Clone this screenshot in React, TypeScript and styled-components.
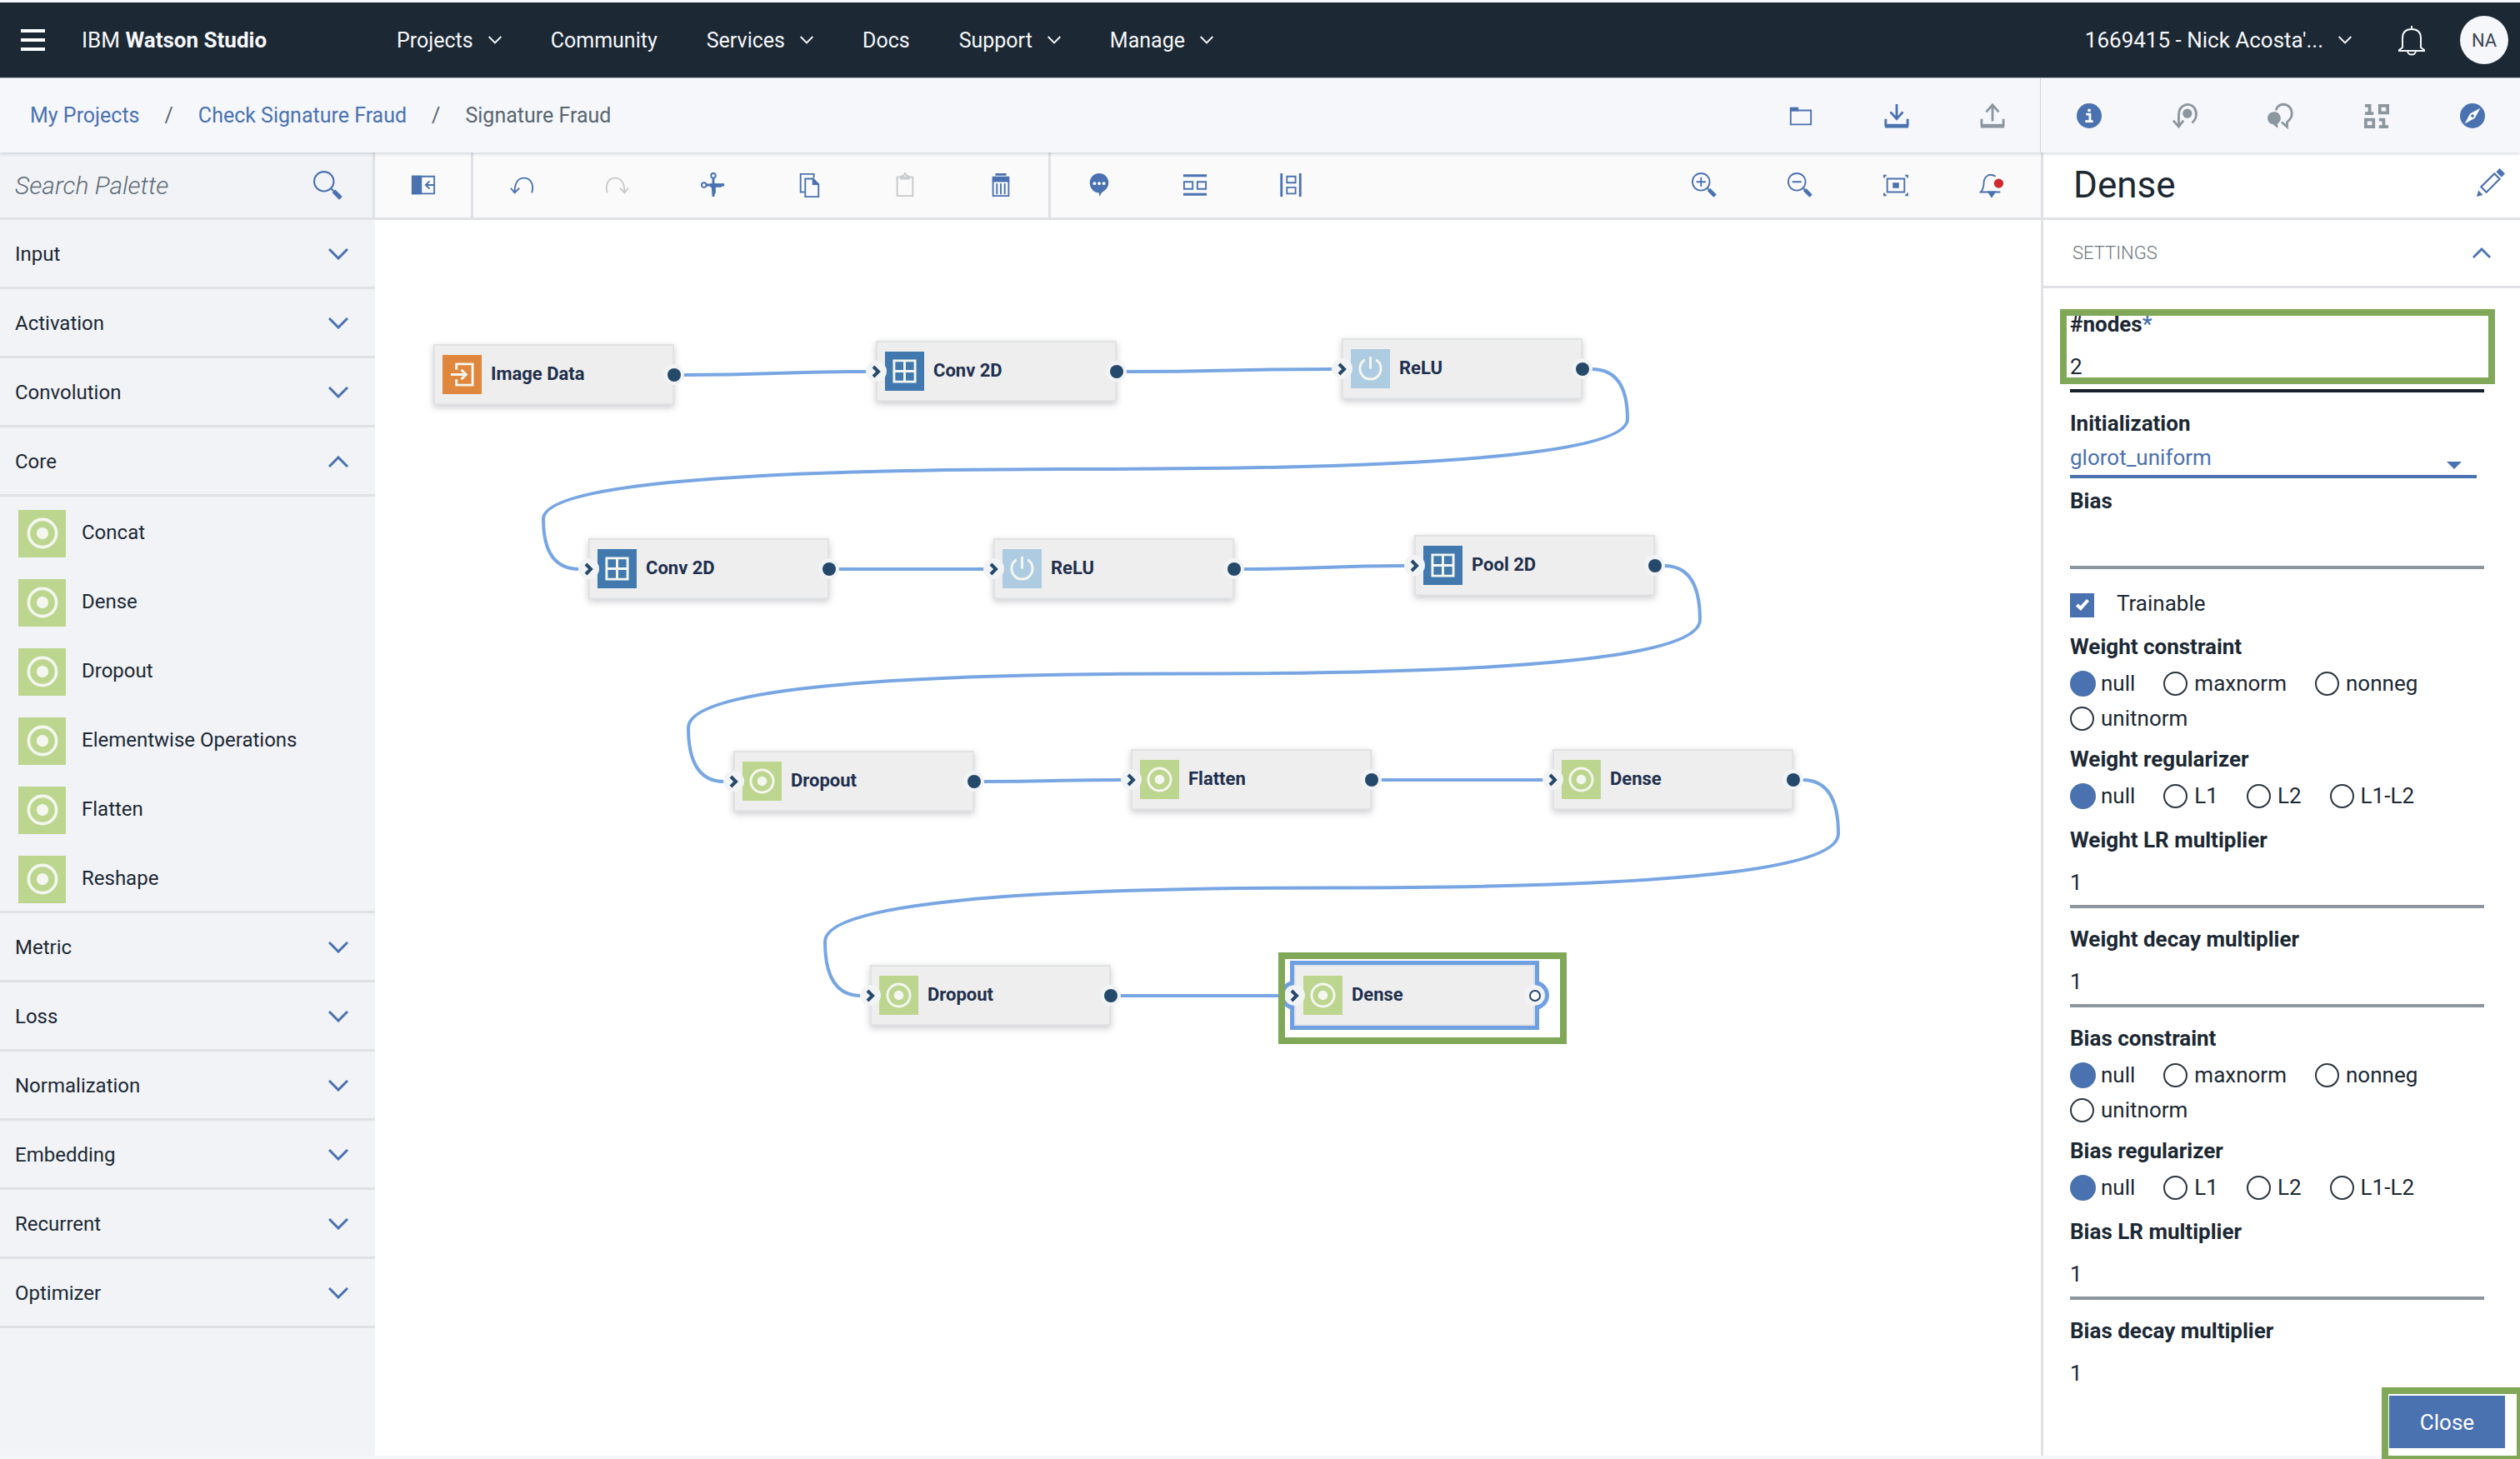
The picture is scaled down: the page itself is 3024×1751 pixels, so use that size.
import React from "react";
import styled, { createGlobalStyle, css } from "styled-components";

const color = {
  ink: "#1c2833",
  blue: "#4a71b0",
  grey: "#8c969e",
  line: "#dfe1e6",
  paper: "#f5f7fb",
  palette: "#f1f3f7",
  link: "#78a6e3",
  select: "#6f9fe0",
  port: "#25496b",
  mark: "#80a858",
};

const GlobalStyle = createGlobalStyle`
  *, *::before, *::after { box-sizing: border-box; }
  body {
    margin: 0;
    background: #fff;
    color: ${color.ink};
    font-family: Roboto, "Liberation Sans", sans-serif;
    font-size: 26px;
  }
  button, input, select { font: inherit; color: inherit; }
  button { border: 0; padding: 0; background: none; cursor: pointer; }
  a { color: inherit; text-decoration: none; }
`;

/* ---------- Shell ---------- */

const Page = styled.div`
  display: flex;
  flex-direction: column;
  height: 100vh;
  border-bottom: 4px solid ${color.paper};
`;

const Header = styled.header`
  flex: none;
  display: flex;
  align-items: center;
  height: 94px;
  padding: 0 14px 0 25px;
  border-top: 3px solid ${color.paper};
  border-bottom: 1px solid #b9c2ca;
  background: ${color.ink};
  color: #f5f7fb;
`;

const MenuButton = styled.button`
  display: flex;
  flex-direction: column;
  gap: 7px;
  width: 29px;
`;

const MenuBar = styled.span`
  height: 4px;
  background: #fff;
`;

const Brand = styled.a`
  margin-left: 44px;
  width: 378px;
`;

const Nav = styled.nav`
  flex: 1;
  display: flex;
  align-items: center;
  gap: 59px;
  font-size: 25px;
`;

const NavButton = styled.button`
  display: flex;
  align-items: center;
  gap: 18px;
`;

const BellButton = styled.button`
  display: flex;
  margin: 0 42px 0 56px;
`;

const Avatar = styled.button`
  width: 58px;
  height: 58px;
  border-radius: 50%;
  background: ${color.paper};
  color: #3c4650;
  font-size: 22px;
`;

const CrumbBar = styled.div`
  flex: none;
  position: relative;
  z-index: 2;
  display: flex;
  height: 89px;
  background: ${color.paper};
  box-shadow: 0 2px 4px rgba(40, 50, 70, 0.16);
`;

const Crumbs = styled.nav`
  flex: 1;
  display: flex;
  align-items: center;
  gap: 30px;
  padding-left: 36px;
  color: #5a6570;
  font-size: 25px;
  a { color: ${color.blue}; }
`;

const IconGroup = styled.div<{ $ruled?: boolean }>`
  display: flex;
  border-left: ${(p) => (p.$ruled ? `1px solid #cfd4da` : "0")};
`;

const IconButton = styled.button<{ $tone?: "grey" | "faint" }>`
  flex: none;
  width: 115px;
  display: flex;
  align-items: center;
  justify-content: center;
  color: ${(p) => (p.$tone === "grey" ? color.grey : p.$tone === "faint" ? "#c6c8ca" : color.blue)};
`;

const Body = styled.div`
  flex: 1;
  min-height: 0;
  display: grid;
  grid-template-columns: 450px minmax(0, 1fr) 575px;
`;

/* ---------- Palette ---------- */

const Palette = styled.aside`
  background: ${color.palette};
`;

const SearchBox = styled.label`
  display: flex;
  align-items: center;
  height: 81px;
  padding: 0 37px 0 18px;
  border-right: 3px solid ${color.line};
  border-bottom: 3px solid ${color.line};
  color: ${color.blue};
`;

const SearchInput = styled.input`
  flex: 1;
  min-width: 0;
  border: 0;
  padding: 0;
  outline: 0;
  background: none;
  font-size: 30px;
  font-style: italic;
  font-weight: 300;
  &::placeholder { color: #5f6a75; opacity: 1; }
`;

const Category = styled.button`
  display: flex;
  align-items: center;
  justify-content: space-between;
  width: 100%;
  height: 83px;
  padding: 2px 32px 0 18px;
  border-bottom: 3px solid ${color.line};
  font-size: 24px;
  svg { color: ${color.blue}; }
`;

const NodeList = styled.div`
  display: flex;
  flex-direction: column;
  padding-bottom: 2px;
`;

const PaletteItem = styled.button`
  display: flex;
  align-items: center;
  gap: 19px;
  height: 83px;
  padding: 5px 0 0 22px;
  font-size: 24px;
`;

const ItemName = styled.span`
  padding-bottom: 3px;
`;

/* ---------- Toolbar and canvas ---------- */

const Stage = styled.main`
  display: flex;
  flex-direction: column;
  min-width: 0;
`;

const Toolbar = styled.div`
  flex: none;
  display: flex;
  height: 81px;
  padding-right: 2px;
  border-bottom: 3px solid ${color.line};
  background: #fafafa;
`;

const Divider = styled.span`
  width: 3px;
  background: ${color.line};
`;

const Spacer = styled.span`
  flex: 1;
`;

const Canvas = styled.section`
  flex: 1;
  position: relative;
  overflow: hidden;
`;

const Links = styled.svg`
  position: absolute;
  inset: 0;
  width: 100%;
  height: 100%;
`;

const NodeCard = styled.div<{ $x: number; $y: number; $selected?: boolean }>`
  position: absolute;
  left: ${(p) => p.$x}px;
  top: ${(p) => p.$y}px;
  display: flex;
  align-items: center;
  gap: 11px;
  width: 289px;
  height: 73px;
  padding-left: 9px;
  border: 2px solid #e0e2e4;
  background: #eee;
  box-shadow: 0 3px 8px rgba(40, 40, 60, 0.24);
  color: #1f2f4d;
  font-size: 22px;
  font-weight: 700;
  ${(p) => p.$selected && css`box-shadow: 0 0 0 5px ${color.select};`}
`;

const Port = styled.span<{ $side: "left" | "right"; $selected?: boolean }>`
  position: absolute;
  top: 22px;
  ${(p) => p.$side}: -14px;
  width: 25px;
  height: 25px;
  border-radius: 50%;
  background: #f2f3f4;
  display: flex;
  align-items: center;
  justify-content: center;
  svg { position: relative; }
  ${(p) => p.$selected && css`
    &::before {
      content: "";
      position: absolute;
      inset: 0;
      border-radius: 50%;
      box-shadow: 0 0 0 5px ${color.select};
      clip-path: ${p.$side === "left" ? "inset(-6px 13px -6px -6px)" : "inset(-6px -6px -6px 13px)"};
    }
  `}
`;

const Tile = styled.span<{ $fill: string; $size: number }>`
  flex: none;
  display: flex;
  align-items: center;
  justify-content: center;
  width: ${(p) => p.$size}px;
  height: ${(p) => p.$size}px;
  background: ${(p) => p.$fill};
  color: #f4f6f0;
`;

const CanvasMark = styled.span`
  position: absolute;
  left: 1084px;
  top: 879px;
  width: 346px;
  height: 110px;
  border: 8px solid ${color.mark};
  pointer-events: none;
`;

/* ---------- Settings panel ---------- */

const Panel = styled.aside`
  display: flex;
  flex-direction: column;
  min-height: 0;
  border-left: 3px solid ${color.line};
`;

const PanelTitle = styled.div`
  flex: none;
  display: flex;
  align-items: center;
  justify-content: space-between;
  height: 81px;
  padding: 0 18px 0 36px;
  border-bottom: 3px solid ${color.line};
  color: ${color.blue};
`;

const Title = styled.h1`
  margin: 0;
  font-size: 44px;
  font-weight: 400;
  color: ${color.ink};
`;

const SectionButton = styled.button`
  flex: none;
  display: flex;
  align-items: center;
  justify-content: space-between;
  height: 82px;
  padding: 0 35px;
  border-bottom: 3px solid ${color.line};
  color: #6d7680;
  font-size: 22px;
  font-weight: 300;
  svg { color: ${color.blue}; }
`;

const Form = styled.form`
  flex: 1;
  min-height: 0;
  overflow: hidden;
  padding: 27px 43px 0 32px;
`;

const FieldBox = styled.div<{ $gap?: number }>`
  position: relative;
  margin-bottom: ${(p) => p.$gap ?? 21}px;
`;

const caption = css`
  display: block;
  line-height: 32px;
  font-weight: 700;
`;

const FieldLabel = styled.label`
  ${caption}
  span { color: ${color.blue}; }
`;

const TextInput = styled.input<{ $active?: boolean }>`
  display: block;
  width: 100%;
  height: 66px;
  padding: 8px 0 0;
  border: 0;
  border-bottom: 4px solid ${(p) => (p.$active ? "#15202b" : color.grey)};
  outline: 0;
  background: none;
`;

const FieldMark = styled.span`
  position: absolute;
  top: -2px;
  left: -12px;
  right: -13px;
  height: 90px;
  border: 8px solid ${color.mark};
  pointer-events: none;
`;

const SelectWrap = styled.div`
  position: relative;
  margin-right: 9px;
  color: ${color.blue};
  svg {
    position: absolute;
    right: 18px;
    bottom: 11px;
    pointer-events: none;
  }
`;

const Select = styled.select`
  display: block;
  appearance: none;
  width: 100%;
  height: 50px;
  padding: 4px 0 0;
  border: 0;
  border-bottom: 4px solid ${color.blue};
  border-radius: 0;
  outline: 0;
  background: none;
`;

const CheckRow = styled.label`
  display: flex;
  gap: 27px;
  height: 56px;
  padding-top: 8px;
  line-height: 24px;
`;

const Checkbox = styled.input`
  appearance: none;
  display: flex;
  align-items: center;
  justify-content: center;
  width: 29px;
  height: 29px;
  margin: 0;
  background: ${color.blue};
  &::after {
    content: "";
    width: 8px;
    height: 15px;
    margin-bottom: 4px;
    border: solid #fff;
    border-width: 0 4px 4px 0;
    transform: rotate(42deg);
  }
`;

const RadioSet = styled.fieldset<{ $gap: number }>`
  margin: 0 0 ${(p) => p.$gap}px;
  padding: 0;
  border: 0;
`;

const Legend = styled.legend`
  ${caption}
  padding: 0 0 7px;
`;

const Options = styled.div`
  display: flex;
  flex-wrap: wrap;
  column-gap: 34px;
`;

const Option = styled.label`
  display: flex;
  align-items: center;
  height: 42px;
`;

const Radio = styled.input`
  appearance: none;
  width: 29px;
  height: 29px;
  margin: 0 8px 0 0;
  border: 2px solid #2b3640;
  border-radius: 50%;
  &:checked {
    width: 31px;
    height: 31px;
    margin-right: 6px;
    border: 0;
    background: ${color.blue};
  }
`;

const PanelFooter = styled.div`
  flex: none;
  position: relative;
  display: flex;
  justify-content: flex-end;
  padding: 10px 18px 9px;
  background: #fff;
`;

const CloseButton = styled.button`
  width: 139px;
  height: 63px;
  background: ${color.blue};
  color: #fff;
`;

const CloseMark = styled.span`
  position: absolute;
  top: 0;
  right: 0;
  bottom: -4px;
  width: 166px;
  border: solid ${color.mark};
  border-width: 8px 4px 4px 8px;
  pointer-events: none;
`;

/* ---------- Icons ---------- */

const Chevron = ({ size = 24, up = false, weight = 3 }: { size?: number; up?: boolean; weight?: number }) => (
  <svg width={size} height={size / 2 + 2} viewBox="0 0 24 14" fill="none" stroke="currentColor" strokeWidth={weight}>
    <path d={up ? "M1 13 12 2l11 11" : "M1 1l11 11L23 1"} />
  </svg>
);

const glyphs: Record<string, React.ReactNode> = {
  panel: (
    <>
      <path d="M2 5h28v22H2zM13 5v22" />
      <path d="M2 5h11v22H2z" fill="currentColor" />
      <path d="M30 16H19M24 11l-5 5 5 5" />
    </>
  ),
  undo: <path d="M29 26c3-10-1-19-10-19C11 7 7 13 7 26M2 20l5 6 6-6" />,
  redo: <path d="M3 26C0 16 4 7 13 7c8 0 12 6 12 19M19 20l6 6 5-6" />,
  cut: (
    <>
      <circle cx="16" cy="4" r="3" />
      <circle cx="4" cy="16" r="3" />
      <path d="M16 7v24M7 16h23" strokeWidth="3" />
      <path d="M12 14h18l-4 5H12zM13 14h6v12l-4 5z" fill="currentColor" stroke="none" />
    </>
  ),
  copy: (
    <>
      <path d="M10 25H5V2h17v5" />
      <path d="M11 8h10l7 7v16H11z" />
      <path d="M20 7l9 9h-9z" fill="currentColor" stroke="none" />
    </>
  ),
  paste: (
    <>
      <path d="M6 6h20v24H6z" />
      <path d="M11 8V5l3-1 2-3 2 3 3 1v3z" />
    </>
  ),
  trash: (
    <>
      <path d="M6 11h20v19H6zM11 14v14M16 14v14M21 14v14" />
      <path d="M9 1h14v3H9zM5 5h22v7H5z" fill="currentColor" stroke="none" />
    </>
  ),
  comment: (
    <>
      <path d="M16 1a12 12 0 0 1 12 12c0 6-4 10-8 12l-4 6v-5C9 26 4 20 4 13A12 12 0 0 1 16 1z" fill="currentColor" stroke="none" />
      <g fill="#fff" stroke="none">
        <circle cx="10" cy="14" r="2" />
        <circle cx="16" cy="14" r="2" />
        <circle cx="22" cy="14" r="2" />
      </g>
    </>
  ),
  rows: (
    <>
      <path d="M1 4h30M1 28h30" strokeWidth="3" />
      <path d="M2 12h11v9H2zM19 12h11v9H19z" />
    </>
  ),
  columns: (
    <>
      <path d="M4 1v30M28 1v30" strokeWidth="3" />
      <path d="M11 5h11v8H11zM11 19h11v8H11z" />
    </>
  ),
  zoomIn: (
    <>
      <circle cx="12" cy="12" r="11" />
      <path d="M6 12h12M12 6v12M20 20l3 3" />
      <path d="M22 22l8 8" strokeWidth="5" />
    </>
  ),
  zoomOut: (
    <>
      <circle cx="12" cy="12" r="11" />
      <path d="M6 12h12M20 20l3 3" />
      <path d="M22 22l8 8" strokeWidth="5" />
    </>
  ),
  fit: (
    <>
      <path d="M5 8h22v17H5z" />
      <path d="M12 13h8v7h-8z" fill="currentColor" stroke="none" />
      <path d="M1 7V4h3M28 4h3v3M1 26v3h3M28 29h3v-3" />
    </>
  ),
  alerts: (
    <>
      <path d="M21 5C13 0 7 5 6 12c0 6-1 10-4 13h25" />
      <path d="M12 25h8l-4 6z" fill="currentColor" />
      <circle cx="25" cy="14" r="6" fill="#d0282f" stroke="none" />
    </>
  ),
  folder: (
    <>
      <path d="M3 9h26v18H3z" />
      <path d="M2 5h11v5H2z" fill="currentColor" stroke="none" />
    </>
  ),
  download: (
    <>
      <path d="M16 1v18M8 11l8 9 8-9M2 20v9M30 20v9" strokeWidth="3" />
      <path d="M1 29h30" strokeWidth="5" />
    </>
  ),
  upload: (
    <>
      <path d="M16 23V4M8 11l8-9 8 9M2 20v9M30 20v9" strokeWidth="3" />
      <path d="M1 29h30" strokeWidth="5" />
    </>
  ),
  info: (
    <>
      <circle cx="16" cy="16" r="16" fill="currentColor" stroke="none" />
      <path d="M12 14h5v9M11 23h10" stroke="#fff" strokeWidth="3" />
      <circle cx="16" cy="9" r="2" fill="#fff" stroke="none" />
    </>
  ),
  loop: (
    <>
      <path d="M25 25c6-5 7-13 3-19C22-2 8 1 8 15v14M1 22l7 8 6-8" strokeWidth="3" />
      <circle cx="19" cy="13" r="6" fill="currentColor" stroke="none" />
    </>
  ),
  chat: (
    <>
      <path d="M10 9C11 3 17 0 23 2c8 3 9 14 4 19l-3 3v6l-7-6" strokeWidth="3" />
      <path d="M8 11a8 8 0 0 1 6 13l-2 2v6l-6-5A8 8 0 0 1 8 11z" fill="currentColor" stroke="none" />
    </>
  ),
  binary: (
    <path d="M1 3h6v10M1 13h11M20 3h10v9H20zM2 21h10v9H2zM19 21h6v9M19 30h12" strokeWidth="4" />
  ),
  compass: (
    <>
      <circle cx="16" cy="16" r="16" fill="currentColor" stroke="none" />
      <path d="M26 6l-7 13-13 7 7-13z" fill="#fff" stroke="none" />
      <circle cx="16" cy="16" r="2" fill="currentColor" stroke="none" />
    </>
  ),
  search: (
    <>
      <circle cx="12" cy="12" r="11" />
      <path d="M20 20l3 3" />
      <path d="M23 23l8 8" strokeWidth="5" />
    </>
  ),
  pencil: (
    <>
      <path d="M20 6l6 6L11 27l-6-6z" />
      <path d="M26 0l6 6-4 4-6-6zM2 25l5 5-7 2z" fill="currentColor" stroke="none" />
    </>
  ),
  bell: (
    <path d="M16-1v3M5 25V14C5 7 9 3 16 3s11 4 11 11v11l4 3v1H1v-1zM11 29c0 6 10 6 10 0" strokeWidth="2" />
  ),
};

const Icon = ({ name, size = 32 }: { name: string; size?: number }) => (
  <svg width={size} height={size} viewBox="0 0 32 32" fill="none" stroke="currentColor" strokeWidth="2" overflow="visible">
    {glyphs[name]}
  </svg>
);

type Kind = "input" | "grid" | "power" | "core";

const kindFill: Record<Kind, string> = {
  input: "#e0873d",
  grid: "#4178ae",
  power: "#aecce1",
  core: "#bdd68f",
};

const kindDrawing: Record<Kind, React.ReactNode> = {
  input: <path d="M9 10V3h20v26H9v-7M2 16h19M15 10l6 6-6 6" />,
  grid: <path d="M3 3h26v26H3zM16 3v26M3 16h26" />,
  power: <path d="M16 1v15M9 5a13 13 0 1 0 14 0" />,
  core: (
    <>
      <circle cx="16" cy="16" r="14" />
      <circle cx="16" cy="16" r="6" fill="currentColor" stroke="none" />
    </>
  ),
};

const KindTile = ({ kind, large = false }: { kind: Kind; large?: boolean }) => (
  <Tile $fill={kindFill[kind]} $size={large ? 57 : 47}>
    <svg width={large ? 38 : 31} height={large ? 38 : 31} viewBox="0 0 32 32" fill="none" stroke="currentColor" strokeWidth="3">
      {kindDrawing[kind]}
    </svg>
  </Tile>
);

/* ---------- Data ---------- */

const navItems = [
  { text: "Projects", menu: true },
  { text: "Community" },
  { text: "Services", menu: true },
  { text: "Docs" },
  { text: "Support", menu: true },
  { text: "Manage", menu: true },
];

const categories = [
  "Input", "Activation", "Convolution", "Core", "Metric",
  "Loss", "Normalization", "Embedding", "Recurrent", "Optimizer",
];

const coreNodes = ["Concat", "Dense", "Dropout", "Elementwise Operations", "Flatten", "Reshape"];

interface FlowNode { label: string; kind: Kind; x: number; y: number }

const flow: FlowNode[] = [
  { label: "Image Data", kind: "input", x: 70, y: 149 },
  { label: "Conv 2D", kind: "grid", x: 601, y: 145 },
  { label: "ReLU", kind: "power", x: 1160, y: 142 },
  { label: "Conv 2D", kind: "grid", x: 256, y: 382 },
  { label: "ReLU", kind: "power", x: 742, y: 382 },
  { label: "Pool 2D", kind: "grid", x: 1247, y: 378 },
  { label: "Dropout", kind: "core", x: 430, y: 637 },
  { label: "Flatten", kind: "core", x: 907, y: 635 },
  { label: "Dense", kind: "core", x: 1413, y: 635 },
  { label: "Dropout", kind: "core", x: 594, y: 894 },
  { label: "Dense", kind: "core", x: 1103, y: 894 },
];

const linkPath = (a: FlowNode, b: FlowNode) => {
  const x1 = a.x + 300, y1 = a.y + 37, x2 = b.x - 11, y2 = b.y + 37;
  const midX = (x1 + x2) / 2, midY = (y1 + y2) / 2;
  if (x2 > x1) return `M${x1} ${y1}C${midX} ${y1} ${midX} ${y2} ${x2} ${y2}`;
  const right = x1 + 43, left = x2 - 43;
  return `M${x1} ${y1}Q${right} ${y1} ${right} ${(y1 + midY) / 2}Q${right} ${midY} ${midX} ${midY}` +
    `Q${left} ${midY} ${left} ${(y2 + midY) / 2}Q${left} ${y2} ${x2} ${y2}`;
};

/* ---------- Parts ---------- */

const Tool = ({ icon, label, tone }: { icon: string; label: string; tone?: "grey" | "faint" }) => (
  <IconButton type="button" aria-label={label} $tone={tone}>
    <Icon name={icon} size={30} />
  </IconButton>
);

const FlowCard = ({ node, first, last }: { node: FlowNode; first: boolean; last: boolean }) => (
  <NodeCard $x={node.x} $y={node.y} $selected={last}>
    {!first && (
      <Port $side="left" $selected={last}>
        <svg width="12" height="16" viewBox="0 0 12 16" fill="none" stroke={color.port} strokeWidth="4">
          <path d="M2 2l6 6-6 6" />
        </svg>
      </Port>
    )}
    <Port $side="right" $selected={last}>
      <svg width="16" height="16" viewBox="0 0 16 16">
        {last ? (
          <circle cx="8" cy="8" r="6" fill="#fff" stroke={color.port} strokeWidth="2" />
        ) : (
          <circle cx="8" cy="8" r="8" fill={color.port} />
        )}
      </svg>
    </Port>
    <KindTile kind={node.kind} />
    <ItemName>{node.label}</ItemName>
  </NodeCard>
);

const Field = ({ id, label, value = "", marked = false }: { id: string; label: string; value?: string; marked?: boolean }) => (
  <FieldBox $gap={id === "bias" ? 0 : undefined}>
    <FieldLabel htmlFor={id}>
      {label}
      {marked && <span>*</span>}
    </FieldLabel>
    <TextInput id={id} type="text" defaultValue={value} $active={marked} />
    {marked && <FieldMark />}
  </FieldBox>
);

const Radios = ({ name, label, options, gap }: { name: string; label: string; options: string[]; gap: number }) => (
  <RadioSet $gap={gap}>
    <Legend>{label}</Legend>
    <Options>
      {options.map((option, i) => (
        <Option key={option}>
          <Radio type="radio" name={name} defaultChecked={i === 0} />
          {option}
        </Option>
      ))}
    </Options>
  </RadioSet>
);

const TrainableRow = styled(CheckRow)`
  margin-top: 21px;
`;

const constraints = ["null", "maxnorm", "nonneg", "unitnorm"];
const regularizers = ["null", "L1", "L2", "L1-L2"];

export default function App() {
  return (
    <Page>
      <GlobalStyle />
      <Header>
        <MenuButton type="button" aria-label="Menu">
          <MenuBar />
          <MenuBar />
          <MenuBar />
        </MenuButton>
        <Brand href="#home">
          IBM <strong>Watson Studio</strong>
        </Brand>
        <Nav>
          {navItems.map((item) =>
            item.menu ? (
              <NavButton key={item.text} type="button">
                {item.text}
                <Chevron size={16} />
              </NavButton>
            ) : (
              <a key={item.text} href="#nav">{item.text}</a>
            ),
          )}
        </Nav>
        <NavButton type="button">
          1669415 - Nick Acosta'...
          <Chevron size={16} />
        </NavButton>
        <BellButton type="button" aria-label="Notifications">
          <Icon name="bell" />
        </BellButton>
        <Avatar type="button">NA</Avatar>
      </Header>

      <CrumbBar>
        <Crumbs>
          <a href="#projects">My Projects</a>
          <span>/</span>
          <a href="#fraud">Check Signature Fraud</a>
          <span>/</span>
          <span>Signature Fraud</span>
        </Crumbs>
        <IconGroup>
          <Tool icon="folder" label="Open" />
          <Tool icon="download" label="Download" />
          <Tool icon="upload" label="Publish" tone="grey" />
        </IconGroup>
        <IconGroup $ruled>
          <Tool icon="info" label="Information" />
          <Tool icon="loop" label="Versions" tone="grey" />
          <Tool icon="chat" label="Comments" tone="grey" />
          <Tool icon="binary" label="Data" tone="grey" />
          <Tool icon="compass" label="Guide" />
        </IconGroup>
      </CrumbBar>

      <Body>
        <Palette>
          <SearchBox>
            <SearchInput type="text" placeholder="Search Palette" aria-label="Search Palette" />
            <Icon name="search" size={34} />
          </SearchBox>
          {categories.map((name) => (
            <React.Fragment key={name}>
              <Category type="button" aria-expanded={name === "Core"}>
                {name}
                <Chevron up={name === "Core"} />
              </Category>
              {name === "Core" && (
                <NodeList>
                  {coreNodes.map((node) => (
                    <PaletteItem key={node} type="button">
                      <KindTile kind="core" large />
                      <ItemName>{node}</ItemName>
                    </PaletteItem>
                  ))}
                </NodeList>
              )}
              {name === "Core" && <ListEnd />}
            </React.Fragment>
          ))}
        </Palette>

        <Stage>
          <Toolbar>
            <Tool icon="panel" label="Toggle palette" />
            <Divider />
            <Tool icon="undo" label="Undo" />
            <Tool icon="redo" label="Redo" tone="faint" />
            <Tool icon="cut" label="Cut" />
            <Tool icon="copy" label="Copy" />
            <Tool icon="paste" label="Paste" tone="faint" />
            <Tool icon="trash" label="Delete" />
            <Divider />
            <Tool icon="comment" label="Add comment" />
            <Tool icon="rows" label="Arrange horizontally" />
            <Tool icon="columns" label="Arrange vertically" />
            <Spacer />
            <Tool icon="zoomIn" label="Zoom in" />
            <Tool icon="zoomOut" label="Zoom out" />
            <Tool icon="fit" label="Zoom to fit" />
            <Tool icon="alerts" label="Alerts" />
          </Toolbar>
          <Canvas>
            <Links fill="none" stroke={color.link} strokeWidth="4">
              {flow.slice(1).map((node, i) => (
                <path key={i} d={linkPath(flow[i], node)} />
              ))}
            </Links>
            {flow.map((node, i) => (
              <FlowCard key={i} node={node} first={i === 0} last={i === flow.length - 1} />
            ))}
            <CanvasMark />
          </Canvas>
        </Stage>

        <Panel>
          <PanelTitle>
            <Title>Dense</Title>
            <button type="button" aria-label="Rename">
              <Icon name="pencil" size={34} />
            </button>
          </PanelTitle>
          <SectionButton type="button" aria-expanded>
            SETTINGS
            <Chevron up size={22} />
          </SectionButton>
          <Form>
            <Field id="nodes" label="#nodes" value="2" marked />
            <FieldBox $gap={11}>
              <FieldLabel htmlFor="init">Initialization</FieldLabel>
              <SelectWrap>
                <Select id="init" defaultValue="glorot_uniform">
                  <option>glorot_uniform</option>
                </Select>
                <svg width="18" height="9" viewBox="0 0 18 9" fill="currentColor">
                  <path d="M0 0h18L9 9z" />
                </svg>
              </SelectWrap>
            </FieldBox>
            <Field id="bias" label="Bias" />
            <TrainableRow>
              <Checkbox type="checkbox" defaultChecked />
              Trainable
            </TrainableRow>
            <Radios name="weight-constraint" label="Weight constraint" options={constraints} gap={12} />
            <Radios name="weight-regularizer" label="Weight regularizer" options={regularizers} gap={16} />
            <Field id="weight-lr" label="Weight LR multiplier" value="1" />
            <Field id="weight-decay" label="Weight decay multiplier" value="1" />
            <Radios name="bias-constraint" label="Bias constraint" options={constraints} gap={12} />
            <Radios name="bias-regularizer" label="Bias regularizer" options={regularizers} gap={16} />
            <Field id="bias-lr" label="Bias LR multiplier" value="1" />
            <Field id="bias-decay" label="Bias decay multiplier" value="1" />
          </Form>
          <PanelFooter>
            <CloseButton type="button">Close</CloseButton>
            <CloseMark />
          </PanelFooter>
        </Panel>
      </Body>
    </Page>
  );
}

const ListEnd = styled.hr`
  height: 3px;
  margin: -3px 0 0;
  border: 0;
  background: ${color.line};
`;
